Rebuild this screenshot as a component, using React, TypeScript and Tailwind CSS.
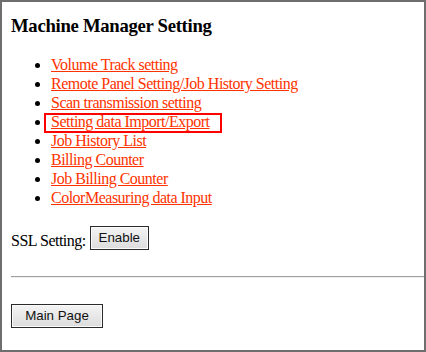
const links = [
  "Volume Track setting",
  "Remote Panel Setting/Job History Setting",
  "Scan transmission setting",
  "Setting data Import/Export",
  "Job History List",
  "Billing Counter",
  "Job Billing Counter",
  "ColorMeasuring data Input",
];

// old-style push button look
const btn =
  "h-[24px] border border-[#2b2b2b] bg-gradient-to-b from-[#f4f4f4] to-[#dcdcdc] shadow-[inset_0_0_0_1px_#fbfbfb] text-[13.33px] leading-none text-[#111] font-['Liberation_Sans',Arial,sans-serif]";

export default function App() {
  return (
    <div className="w-[426px] h-[352px] overflow-hidden border-2 border-[#6e6e6e] bg-white font-['Liberation_Serif','Times_New_Roman',serif] text-black">
      <div className="pl-[9px] pt-[13px]">
        <h3 className="text-[18.72px] leading-[21px] font-bold tracking-[-0.3px]">Machine Manager Setting</h3>

        <ul className="mt-[19px] list-disc pl-[40px] text-[16px] leading-[19px] tracking-[-0.5px]">
          {links.map((l, i) => (
            <li key={l}>
              <span className="relative">
                <a href="#" className="text-[#ff3300] underline">
                  {l}
                </a>
                {i === 3 ? (
                  <span className="absolute -left-[7px] -right-[12px] top-0 -bottom-[3px] border-2 border-[#ff0000]" />
                ) : null}
              </span>
            </li>
          ))}
        </ul>

        <div className="mt-[19px] flex items-end gap-[4px]">
          <span className="text-[16px] leading-[18px] tracking-[-0.5px]">SSL Setting:</span>
          <button className={`${btn} w-[59px]`}>Enable</button>
        </div>

        <hr className="mt-[26px] border-0 border-t border-b border-t-[#a0a0a0] border-b-[#eeeeee]" />

        <button className={`${btn} mt-[26px] w-[92px]`}>Main Page</button>
      </div>
    </div>
  );
}
